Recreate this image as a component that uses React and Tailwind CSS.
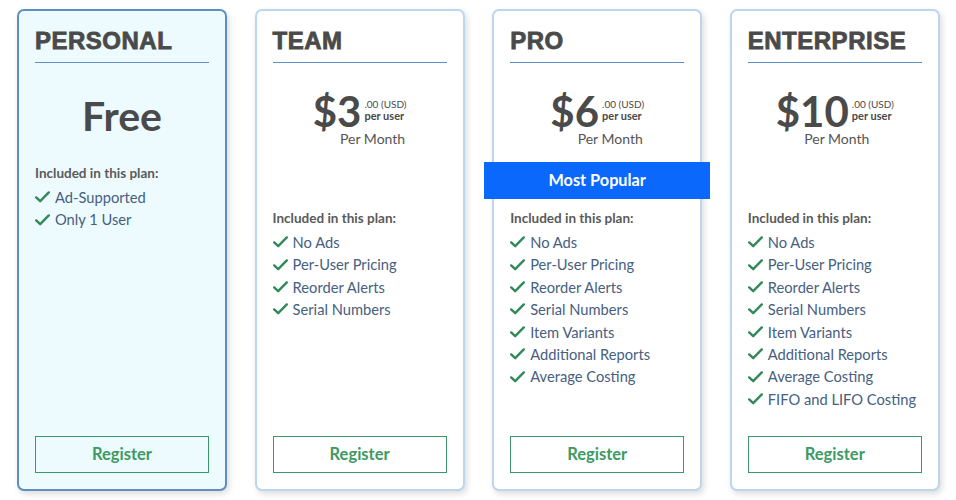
import React from "react";

const plans = [
  {
    name: "PERSONAL",
    price: null,
    features: ["Ad-Supported", "Only 1 User"],
    highlight: true,
  },
  {
    name: "TEAM",
    price: "$3",
    monthPad: "pl-[26px]",
    features: ["No Ads", "Per-User Pricing", "Reorder Alerts", "Serial Numbers"],
  },
  {
    name: "PRO",
    price: "$6",
    monthPad: "pl-[26px]",
    popular: true,
    features: [
      "No Ads",
      "Per-User Pricing",
      "Reorder Alerts",
      "Serial Numbers",
      "Item Variants",
      "Additional Reports",
      "Average Costing",
    ],
  },
  {
    name: "ENTERPRISE",
    price: "$10",
    monthPad: "pl-[4px]",
    features: [
      "No Ads",
      "Per-User Pricing",
      "Reorder Alerts",
      "Serial Numbers",
      "Item Variants",
      "Additional Reports",
      "Average Costing",
      "FIFO and LIFO Costing",
    ],
  },
];

const Check = () => (
  <svg width="15" height="12" viewBox="0 0 15 12" className="shrink-0">
    <path d="M1.2 6.4 L5.2 10.2 L13.8 1.4" fill="none" stroke="#32895a" strokeWidth="2.4" strokeLinecap="round" strokeLinejoin="round" />
  </svg>
);

const PlanCard = ({ plan }) => {
  return (
    <div
      className={
        "w-[210px] h-[482px] flex flex-col px-4 pb-4 rounded-[7px] border-2 shadow-[2px_3px_6px_rgba(0,0,0,0.14)] " +
        (plan.highlight ? "bg-[#edfbfe] border-[#5e8fc0]" : "bg-white border-[#bcd6ee]")
      }
    >
      {/* title */}
      <div className="pt-4 pb-[7px] border-b border-[#5e8fc0]">
        <h2 className="font-['Liberation_Sans',Arial,sans-serif] font-bold text-[24px] leading-[28px] tracking-[0.5px] text-[#4a4a4a] [-webkit-text-stroke:0.8px_#4a4a4a]">
          {plan.name}
        </h2>
      </div>

      {/* price */}
      {plan.price === null ? (
        <>
          <div className="mt-[32px] text-center text-[41px] leading-[41px] font-bold text-[#4a4a4a]">Free</div>
          <div className="mt-[28px] text-[13.5px] leading-[18px] font-bold text-[#5a5a5a]">Included in this plan:</div>
        </>
      ) : (
        <>
          <div className="mt-[28px] flex justify-center items-start text-[#4a4a4a]">
            <span className="text-[42px] leading-[40px] font-bold">{plan.price}</span>
            <div className="ml-[3px] mt-[8px] flex flex-col">
              <span className="text-[10px] leading-[11px]">.00 (USD)</span>
              <span className="text-[11px] leading-[11px] font-bold">per user</span>
            </div>
          </div>
          <div className={"text-center text-[14px] leading-[15px] text-[#555] " + plan.monthPad}>Per Month</div>
          <div className="mt-4 h-[37px] -mx-[26px]">
            {plan.popular && (
              <div className="h-full bg-[#0a68fc] flex items-center justify-center text-white font-bold text-[16.3px]">
                Most Popular
              </div>
            )}
          </div>
          <div className="mt-[10px] text-[13.5px] leading-[18px] font-bold text-[#5a5a5a]">Included in this plan:</div>
        </>
      )}

      {/* features */}
      <ul className="mt-[4px]">
        {plan.features.map((f) => (
          <li key={f} className="flex items-center gap-[5px] text-[14.7px] leading-[22.4px] text-[#46607f]">
            <Check />
            <span>{f}</span>
          </li>
        ))}
      </ul>

      {/* register */}
      <button className="mt-auto h-[37px] w-full border border-[#3c9768] text-[#3d9a62] font-bold text-[16.5px] leading-[35px]">
        Register
      </button>
    </div>
  );
};

export default function App() {
  return (
    <div className="w-[956px] h-[500px] bg-white font-['Lato',sans-serif] pt-[9px] pl-[17px] flex gap-[27.6px]">
      {plans.map((p) => (
        <PlanCard key={p.name} plan={p} />
      ))}
    </div>
  );
}
